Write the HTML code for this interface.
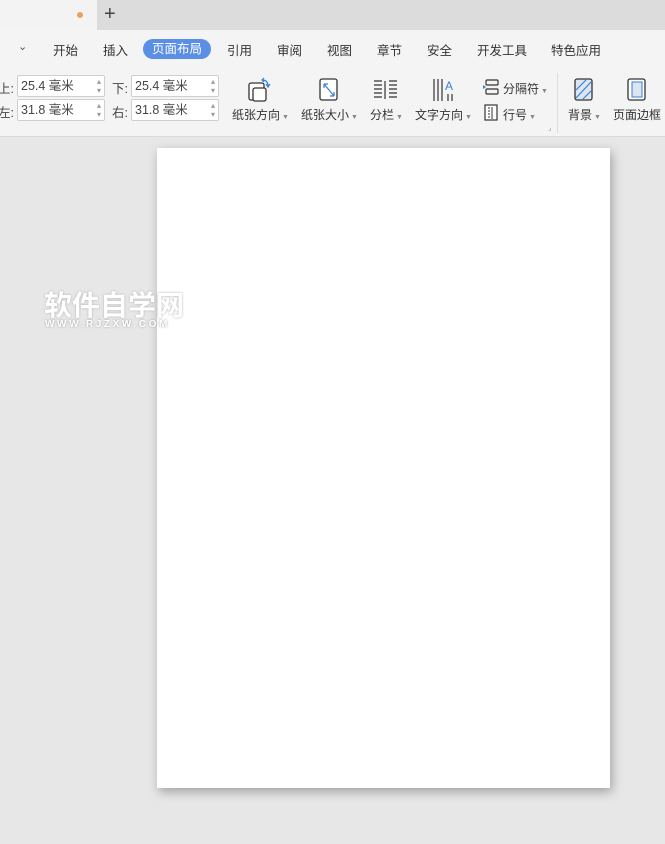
<!DOCTYPE html><html><head><meta charset="utf-8"><style>
body{margin:0;width:665px;height:844px;background:#e7e7e7;font-family:"Liberation Sans","Noto Sans CJK SC",sans-serif;position:relative;overflow:hidden;font-size:12px;color:#333}
.a{position:absolute}
.tabbar{left:0;top:0;width:665px;height:30px;background:#dcdcdc}
.tab{left:0;top:0;width:97px;height:30px;background:#f3f3f3}
.rib{left:0;top:30px;width:665px;height:106px;background:#f4f4f4;border-bottom:1px solid #dadada}
.m{top:40px;font-size:12.5px;color:#333}
.sel{left:143px;top:39px;width:68px;height:20px;border-radius:10px;background:#5b8fe6;color:#fff;text-align:center;line-height:20px;font-size:12.5px}
.in{width:88px;height:22px;border:1px solid #cfcfcf;border-radius:2px;background:#fff;font-size:12.5px;line-height:20px;padding-left:3px;box-sizing:border-box;color:#444}
.in:after{content:"▴\A▾";white-space:pre;position:absolute;right:3px;top:1px;font-size:8px;line-height:9px;color:#999}
.lb{font-size:12.5px;color:#444}
.t{font-size:12px;color:#333;top:106px}
.page{left:157px;top:148px;width:453px;height:640px;background:#fff;box-shadow:2px 4px 10px rgba(0,0,0,.3)}
</style></head><body>
<div class="a tabbar"></div><div class="a tab"></div>
<div class="a" style="left:77px;top:12px;width:6px;height:6px;border-radius:3px;background:#e9a060"></div>
<div class="a" style="left:104px;top:3px;font-size:20px;color:#444">+</div>
<div class="a rib"></div>
<div class="a" style="left:18px;top:40px;font-size:11px;color:#555">⌄</div>
<div class="a m" style="left:53px">开始</div>
<div class="a m" style="left:103px">插入</div>
<div class="a sel">页面布局</div>
<div class="a m" style="left:227px">引用</div>
<div class="a m" style="left:277px">审阅</div>
<div class="a m" style="left:327px">视图</div>
<div class="a m" style="left:377px">章节</div>
<div class="a m" style="left:427px">安全</div>
<div class="a m" style="left:477px">开发工具</div>
<div class="a m" style="left:551px">特色应用</div>
<div class="a lb" style="left:-2px;top:78px">上:</div><div class="a in" style="left:17px;top:75px">25.4 毫米</div>
<div class="a lb" style="left:-2px;top:102px">左:</div><div class="a in" style="left:17px;top:99px">31.8 毫米</div>
<div class="a lb" style="left:112px;top:78px">下:</div><div class="a in" style="left:131px;top:75px">25.4 毫米</div>
<div class="a lb" style="left:112px;top:102px">右:</div><div class="a in" style="left:131px;top:99px">31.8 毫米</div>
<svg class="a" style="left:246px;top:77px" width="28" height="26"><rect x="3" y="6" width="15" height="17" rx="2" fill="#fff" stroke="#333" stroke-width="1.3"/><rect x="7" y="11" width="13" height="13" rx="2" fill="#fff" stroke="#333" stroke-width="1.3"/><path d="M16 3q6 0 6 6M20 7l2 3 2-3M18 1l-2 2 2 2" fill="none" stroke="#3a7fd5" stroke-width="1.2"/></svg>
<div class="a t" style="left:232px">纸张方向<span style="font-size:7px;color:#888"> ▼</span></div>
<svg class="a" style="left:318px;top:78px" width="22" height="24"><rect x="2" y="1" width="17" height="21" rx="2" fill="#fff" stroke="#333" stroke-width="1.3"/><path d="M6 6l10 12M6 6v4M6 6h4M16 18v-4M16 18h-4" stroke="#3a7fd5" stroke-width="1.2" fill="none"/></svg>
<div class="a t" style="left:301px">纸张大小<span style="font-size:7px;color:#888"> ▼</span></div>
<svg class="a" style="left:373px;top:80px" width="26" height="20" stroke="#333" stroke-width="1.2"><path d="M1 1h8M1 5h8M1 9h8M1 13h8M1 17h8M12 1v18M16 1h8M16 5h8M16 9h8M16 13h8M16 17h8"/></svg>
<div class="a t" style="left:370px">分栏<span style="font-size:7px;color:#888"> ▼</span></div>
<svg class="a" style="left:432px;top:78px" width="24" height="24"><path d="M2 1v22M6 1v22M10 1v22M16 16v7M20 16v7" stroke="#333" stroke-width="1.2"/><text x="13" y="12" font-size="12" fill="#3a7fd5" font-family="Liberation Sans">A</text></svg>
<div class="a t" style="left:415px">文字方向<span style="font-size:7px;color:#888"> ▼</span></div>
<svg class="a" style="left:483px;top:79px" width="18" height="16"><rect x="3" y="1" width="12" height="5" rx="1" fill="none" stroke="#333" stroke-width="1.2"/><rect x="3" y="10" width="12" height="5" rx="1" fill="none" stroke="#333" stroke-width="1.2"/><path d="M0 6l3 2-3 2z" fill="#3a7fd5"/></svg>
<div class="a" style="left:503px;top:80px">分隔符<span style="font-size:7px;color:#888"> ▼</span></div>
<svg class="a" style="left:484px;top:104px" width="14" height="17"><rect x="1" y="1" width="12" height="15" fill="#fff" stroke="#333" stroke-width="1.2"/><path d="M4 4h2M4 7h2M4 10h2M4 13h2M8 3v12" stroke="#333"/></svg>
<div class="a" style="left:503px;top:106px">行号<span style="font-size:7px;color:#888"> ▼</span></div>
<div class="a" style="left:548px;top:124px;font-size:7px;color:#888">⌟</div>
<div class="a" style="left:557px;top:73px;width:1px;height:60px;background:#ddd"></div>
<svg class="a" style="left:573px;top:78px" width="22" height="24"><rect x="2" y="1" width="17" height="21" rx="2" fill="#dce6f3" stroke="#333" stroke-width="1.3"/><path d="M3 12l10-10M3 20l15-16M10 21l8-8" stroke="#3a7fd5" stroke-width="1.2"/></svg>
<div class="a t" style="left:568px">背景<span style="font-size:7px;color:#888"> ▼</span></div>
<svg class="a" style="left:626px;top:78px" width="22" height="24"><rect x="2" y="1" width="17" height="21" rx="2" fill="#fff" stroke="#333" stroke-width="1.3"/><rect x="6" y="4" width="10" height="15" fill="#dce6f3" stroke="#3a7fd5"/></svg>
<div class="a t" style="left:613px;white-space:nowrap">页面边框</div>
<div class="a page"></div>
<div class="a" style="left:44px;top:291px;font-size:28px;line-height:30px;font-weight:bold;color:#fff;text-shadow:0 0 2px #aaa">软件自学网</div>
<div class="a" style="left:45px;top:319px;font-size:10px;color:#fff;letter-spacing:2.6px;text-shadow:0 0 2px #999;font-weight:bold">WWW.RJZXW.COM</div>
</body></html>
